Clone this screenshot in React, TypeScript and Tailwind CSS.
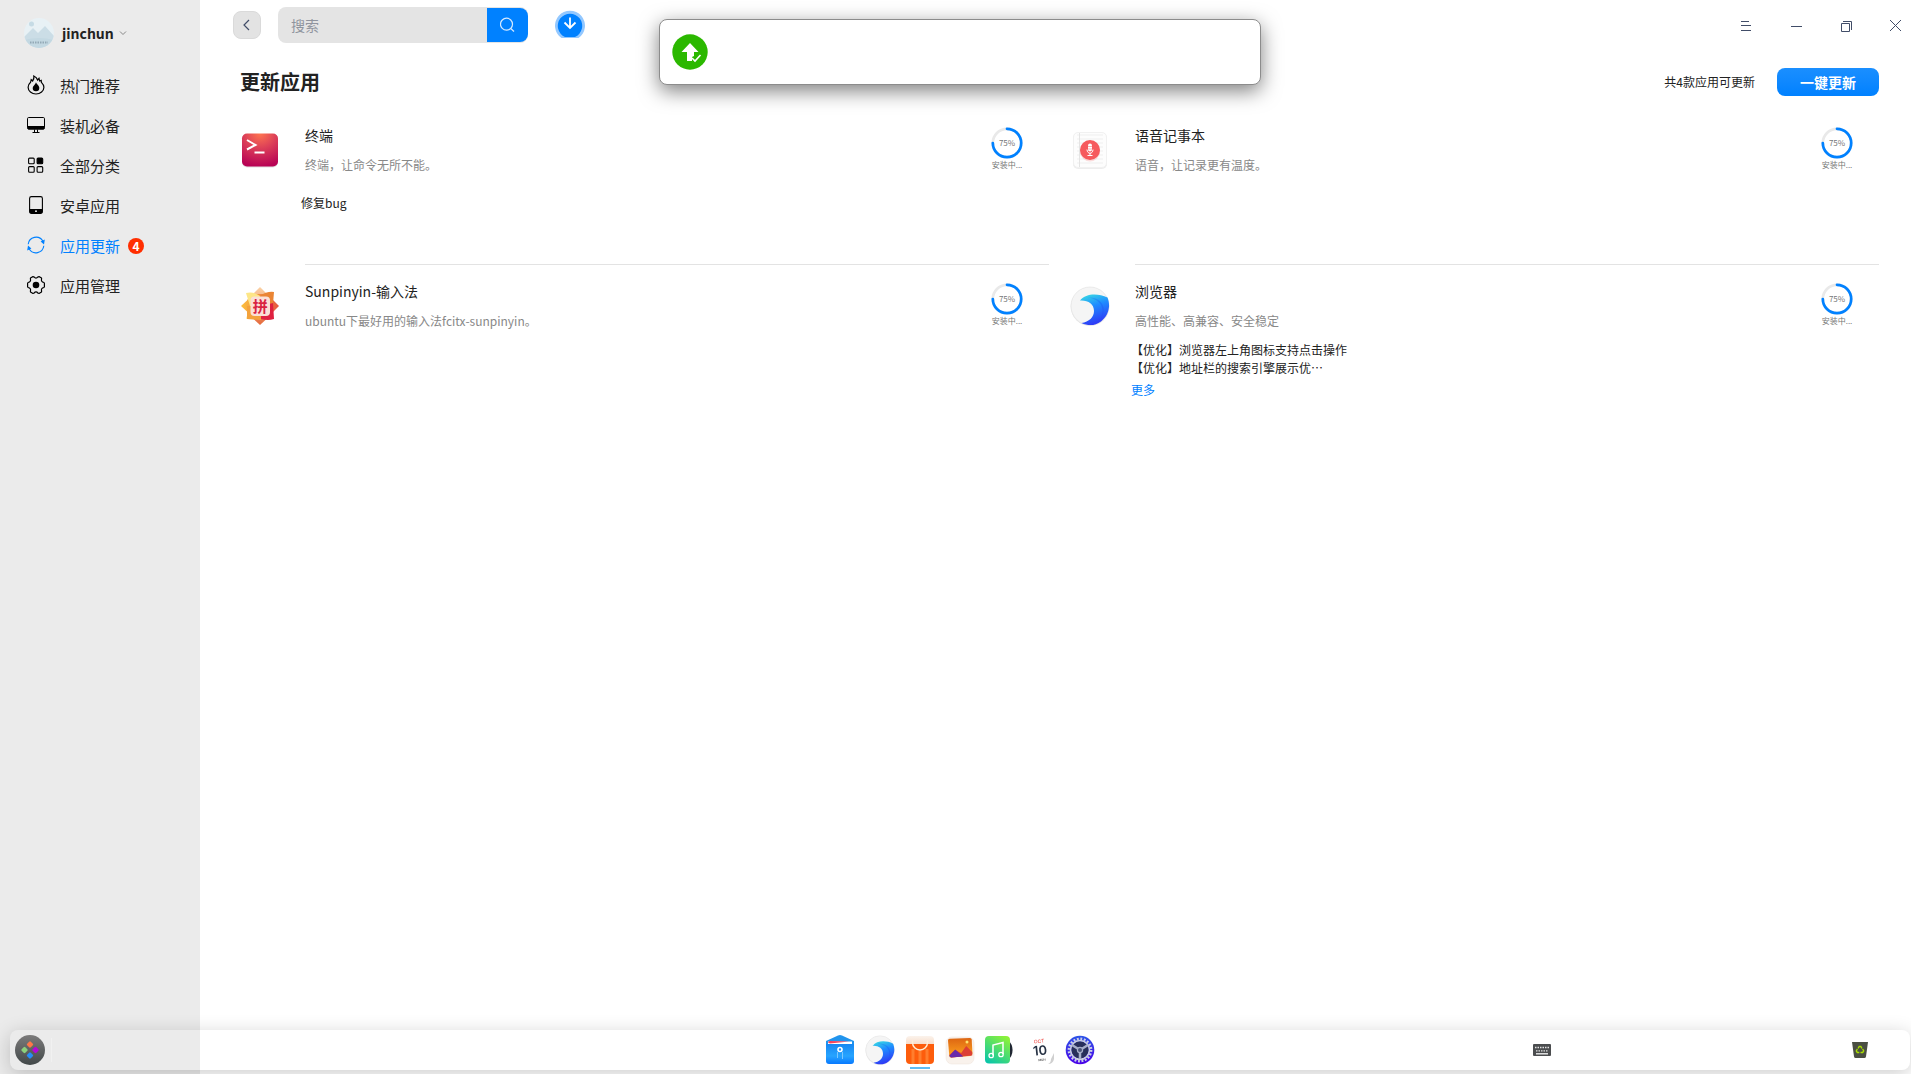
import React from 'react'
import clsx from 'clsx'

type Update = {
  name: string
  desc: string
  notes: string[]
  more?: boolean
  icon: React.ReactNode
}

/* ---------- sidebar icons ---------- */

const FireIcon = () => (
  <svg width="18" height="20" viewBox="0 0 18 20" fill="none" stroke="currentColor" strokeWidth="1.2">
    <path d="M3.600 7.200 4.200 4.600 5.600 6C6.800 4.600 7.200 3 6.800 1c2 .8 3.200 2.200 3.800 4l1.400-1.600.6 2.600 1.600-.6.2 2C16 9 16.900 10.600 16.900 12.200a7.900 6.800 0 0 1-15.800 0c0-2 .9-3.600 2.500-5Z" />
    <path d="M9 7.200c.4 2 3.300 3 3.300 5.700a3.300 3.300 0 0 1-6.600 0C5.700 10.900 8.600 9.400 9 7.200Z" fill="currentColor" stroke="none" />
  </svg>
)

const MonitorIcon = () => (
  <svg width="18" height="18" viewBox="0 0 18 18" fill="none" stroke="currentColor" strokeWidth="1">
    <rect x=".5" y="1.500" width="17" height="11.500" rx="1.200" />
    <path d="M.6 10h16.800v2.500l-.8.9H1.400l-.8-.9Z" fill="currentColor" stroke="none" />
    <path d="M7.500 13.500v2.500M10.500 13.500v2.500M5.500 16.500h7" />
  </svg>
)

const GridIcon = () => (
  <svg width="18" height="18" viewBox="0 0 18 18" fill="none" stroke="currentColor" strokeWidth="1.100">
    <rect x="1.600" y="2.100" width="5.600" height="5.600" rx="1" />
    <rect x="10.100" y="2.100" width="5.600" height="5.600" rx="1" fill="currentColor" />
    <rect x="1.600" y="10.600" width="5.600" height="5.600" rx="1" />
    <rect x="10.100" y="10.600" width="5.600" height="5.600" rx="1" />
  </svg>
)

const TabletIcon = () => (
  <svg width="18" height="18" viewBox="0 0 18 18" fill="none" stroke="currentColor" strokeWidth="1.100">
    <rect x="2.600" y=".6" width="12.800" height="16.800" rx="1.800" />
    <path d="M2.600 13h12.800v3.500l-1 .9H3.600l-1-.9Z" fill="currentColor" stroke="none" />
    <circle cx="9" cy="15.200" r=".9" fill="#fff" stroke="none" />
  </svg>
)

const RefreshIcon = () => (
  <svg width="18" height="18" viewBox="0 0 18 18" fill="none" stroke="currentColor" strokeWidth="1.100">
    <path d="M1.200 8.200A7.900 7.900 0 0 1 15.800 5M16.800 9.800A7.900 7.900 0 0 1 2.200 13" />
    <path d="m17.800 3.600-.8 5-3.400-3.200ZM.2 14.400l.8-5 3.400 3.200Z" fill="currentColor" stroke="none" />
  </svg>
)

const GearIcon = () => (
  <svg width="18" height="18" viewBox="0 0 18 18" fill="none" stroke="currentColor" strokeWidth="1.200" strokeLinejoin="round">
    <path d="M5.600.7 7 .9Q9 3.300 11 .9l1.400-.2 2.100 1.300.1.900q-.9 2.800 2.300 3.600l.5.800v3.400l-.5.800q-3.200.8-2.300 3.600l-.1.900-2.100 1.300-1.400-.2q-2-2.400-4 0l-1.400.2L3.500 16l-.1-.9q.9-2.800-2.300-3.600l-.5-.8V7.300l.5-.8q3.200-.8 2.300-3.600L3.500 2Z" />
    <circle cx="9" cy="9" r="3.300" fill="currentColor" stroke="none" />
  </svg>
)

/* ---------- app icons ---------- */

const TerminalIcon = () => (
  <svg width="40" height="40" viewBox="0 0 40 40" fill="none">
    <defs>
      <radialGradient id="term" cx=".5" cy="0" r="1">
        <stop offset="0" stopColor="#ff7550" />
        <stop offset=".45" stopColor="#dc3f58" />
        <stop offset="1" stopColor="#b80355" />
      </radialGradient>
    </defs>
    <rect x="2" y="4" width="36" height="33.500" rx="5" fill="#000" opacity=".12" />
    <rect x="2" y="3.500" width="36" height="33" rx="5" fill="url(#term)" />
    <path d="m7 10 8.500 5L7 19.500M14.500 22.500h10" stroke="#fff" strokeWidth="2" />
  </svg>
)

const VoiceNoteIcon = () => (
  <svg width="40" height="40" viewBox="0 0 40 40" fill="none">
    <rect x="3" y="3" width="34" height="36" rx="5" fill="#000" opacity=".07" />
    <rect x="3.500" y="2.500" width="33" height="35" rx="4.500" fill="#fdfdfd" stroke="#f1f1f1" />
    <path d="M7 5h26M7 9h26M7 13h26M7 17h26M7 21h26M7 25h26M7 29h26M7 33h26" stroke="#efefef" />
    <path d="M9.500 3v34" stroke="#e4e4e4" />
    <circle cx="20" cy="21.500" r="10" fill="#f65a5a" opacity=".2" />
    <circle cx="20" cy="20" r="10" fill="#f65a5d" />
    <rect x="18" y="13.500" width="4" height="8" rx="2" fill="#fff" />
    <path d="M17 19.500c0 5 6 5 6 0M20 23v3M17.500 25.500h5" stroke="#fff" />
    <path d="M17.500 16.500h5M17.500 19h5" stroke="#f65a5d" strokeWidth=".5" />
  </svg>
)

const PinyinIcon = () => (
  <svg width="40" height="40" viewBox="0 0 40 40">
    <defs>
      <linearGradient id="pyA" x1="0" y1="0" x2="0" y2="1">
        <stop offset="0" stopColor="#fbd2a4" />
        <stop offset="1" stopColor="#e56a3c" />
      </linearGradient>
      <linearGradient id="pyB" x1="0" y1="0" x2="1" y2="0">
        <stop offset="0" stopColor="#fcc03e" />
        <stop offset="1" stopColor="#e55740" />
      </linearGradient>
    </defs>
    <path d="M20 1 33 14v13L20 39 7 27V14Z" fill="url(#pyA)" />
    <path d="M1 20 14 8h13l12 12-12 12H14Z" fill="url(#pyB)" />
    <path d="M6 7q7-2 14 3l-5 18-9 5 4-13Z" fill="#fde687" />
    <path d="M20 10q7-5 14-4l-1 12-6 6Z" fill="#ea8534" />
    <path d="M7 20v13l14 1V20Z" fill="#f3a23c" />
    <path d="M21 20v13q7 2 13 0l-1-16Z" fill="#df2140" />
    <rect x="10.500" y="10.500" width="19.500" height="19.500" rx="4" fill="#fbe0d6" />
    <text x="20.200" y="26" textAnchor="middle" fontSize="15" fontWeight="700" fill="#d92341">拼</text>
  </svg>
)

const BrowserIcon = ({ id, size }: { id: string; size: number }) => (
  <svg width={size} height={size} viewBox="0 0 40 40">
    <defs>
      <linearGradient id={id} x1=".2" y1="0" x2=".5" y2="1">
        <stop offset="0" stopColor="#38d8e4" />
        <stop offset=".4" stopColor="#1f8dff" />
        <stop offset="1" stopColor="#2f36f5" />
      </linearGradient>
    </defs>
    <circle cx="20" cy="20.600" r="19.300" fill="#000" opacity=".1" />
    <circle cx="20" cy="20" r="19" fill="#f5f5f5" stroke="#e3e3e3" strokeWidth=".6" />
    <path d="M10 14.500C16 7 28 7 37.500 11.500 41 20 38.500 30 31 35.500 25 40 18 40 11.500 37 19 36 24 31 24 25c0-7-6-11-14-10.500Z" fill={`url(#${id})`} />
    <path d="M17 11.500c10-1 18 5 16.500 14-.5 4-2 7-5 10 8-8 5-23-11.500-24Z" fill="#1745f0" opacity=".25" />
  </svg>
)

const StoreIcon = () => (
  <svg width="30" height="30" viewBox="0 0 30 30" fill="none">
    <defs>
      <linearGradient id="store" x1="0" y1="0" x2="0" y2="1">
        <stop offset="0" stopColor="#fbf3ec" />
        <stop offset="1" stopColor="#f6cdb2" />
      </linearGradient>
    </defs>
    <rect x="1" y="1" width="28" height="14" rx="4" fill="url(#store)" />
    <path d="M1 9h28v16a4 4 0 0 1-4 4H5a4 4 0 0 1-4-4Z" fill="#fd5d0c" />
    <path d="M8 14v15M15 16v13M22 14v15" stroke="#ff8d3d" strokeWidth="3" opacity=".7" />
    <path d="M7.500 5.500v2a7.500 7.500 0 0 0 15 0v-2" stroke="#fff0d8" strokeWidth="1.400" />
  </svg>
)

const FilesIcon = () => (
  <svg width="30" height="30" viewBox="0 0 30 30" fill="none">
    <defs>
      <linearGradient id="files" x1="0" y1="0" x2="0" y2="1">
        <stop offset="0" stopColor="#1687f2" />
        <stop offset=".6" stopColor="#27a4ff" />
        <stop offset="1" stopColor="#0879ff" />
      </linearGradient>
    </defs>
    <path d="M1 6 13 .5q2-.9 4 0L29 6v10H1Z" fill="#2194ed" />
    <path d="M3 6.500h24v4H3Z" fill="#fff" />
    <path d="M3 7.500q0-1.500 2-1.500l19 .5L5 8.500Z" fill="#f4435c" />
    <path d="M1 9h28v17a3 3 0 0 1-3 3H4a3 3 0 0 1-3-3Z" fill="url(#files)" />
    <circle cx="15" cy="14.500" r="2" stroke="#fff" strokeWidth="1.600" />
    <path d="M12.500 17v6M17.500 17v7" stroke="#7cc8ff" />
  </svg>
)

const PhotosIcon = () => (
  <svg width="30" height="30" viewBox="0 0 30 30">
    <defs>
      <linearGradient id="photo" x1="0" y1="0" x2="0" y2="1">
        <stop offset="0" stopColor="#dd6512" />
        <stop offset="1" stopColor="#ffa51f" />
      </linearGradient>
    </defs>
    <rect x="1" y="2" width="28" height="27" rx="6" fill="#f9f2ec" stroke="#ece2da" strokeWidth=".5" />
    <path d="M3 5.500q0-1.500 1.500-1.700L25 3q1.500 0 1.700 1.500L27.500 19l-2 2L6 22.500q-1.500 0-1.700-1.500Z" fill="url(#photo)" />
    <path d="m4.200 20 6-5 6 3 5-7 6 6v3.500L6 22.500Z" fill="#dc3f35" />
    <path d="m4.200 21 6-6.500 8 7L6 22.500Z" fill="#6729aa" />
    <circle cx="22" cy="7" r="1.500" fill="#ffe26c" />
  </svg>
)

const MusicIcon = () => (
  <svg width="30" height="30" viewBox="0 0 30 30" fill="none">
    <defs>
      <linearGradient id="music" x1=".8" y1="0" x2=".2" y2="1">
        <stop offset="0" stopColor="#8df238" />
        <stop offset="1" stopColor="#0bc6a8" />
      </linearGradient>
    </defs>
    <path d="M22 6a12 12 0 0 1 0 18Z" fill="#202733" stroke="#202733" strokeWidth="3" />
    <rect x="0" y="1" width="25" height="27.500" rx="4" fill="url(#music)" />
    <path d="M8 20.500V10l10-2.500V19" stroke="#fff" strokeWidth="1.500" />
    <circle cx="6.200" cy="20.500" r="2.200" stroke="#fff" strokeWidth="1.300" />
    <circle cx="16" cy="19.500" r="2.200" stroke="#fff" strokeWidth="1.300" />
  </svg>
)

const CalendarIcon = () => (
  <svg width="30" height="30" viewBox="0 0 30 30" fontFamily="Inter, sans-serif" textAnchor="middle">
    <path d="M29 18v6q-1 5-6 5 3-1 3-5Z" fill="#d0d0d0" />
    <g transform="rotate(-6 15 15)">
      <text x="15" y="8" fontSize="5" fontWeight="500" fill="#ef5a55">OCT</text>
      <text x="15" y="20" fontSize="13" fontWeight="600" fill="#273244">10</text>
      <text x="16" y="26" fontSize="3" fontWeight="600" fill="#555">MON</text>
    </g>
  </svg>
)

const SettingsIcon = () => (
  <svg width="30" height="30" viewBox="0 0 30 30" fill="none">
    <defs>
      <linearGradient id="settings" x1="0" y1="0" x2="0" y2="1">
        <stop offset="0" stopColor="#2c55e8" />
        <stop offset="1" stopColor="#4a00e8" />
      </linearGradient>
    </defs>
    <circle cx="15" cy="15" r="14.300" fill="url(#settings)" />
    <circle cx="15" cy="15" r="11.200" stroke="#c9cfe6" strokeWidth="2.400" strokeDasharray="1.900 1.620" />
    <circle cx="15" cy="15" r="9.400" stroke="#c9cfe0" strokeWidth="1.800" />
    <circle cx="15" cy="15" r="8.500" fill="#27305a" />
    <path d="M15 15v9M15 15l-8-5M15 15l8-5" stroke="#a6afc9" strokeWidth="2.500" />
    <circle cx="15" cy="15" r="2.600" fill="#4a5478" stroke="#a6afc9" strokeWidth="1.200" />
  </svg>
)

const LauncherIcon = () => (
  <svg width="30" height="30" viewBox="0 0 30 30">
    <defs>
      <linearGradient id="launch" x1="0" y1="0" x2="0" y2="1">
        <stop offset="0" stopColor="#7c7b7b" />
        <stop offset="1" stopColor="#424849" />
      </linearGradient>
    </defs>
    <circle cx="15" cy="15" r="15" fill="url(#launch)" />
    <rect x="12.400" y="6.900" width="5.200" height="5.200" rx="1.200" transform="rotate(45 15 9.500)" fill="#ff7748" />
    <rect x="6.900" y="12.400" width="5.200" height="5.200" rx="1.200" transform="rotate(45 9.500 15)" fill="#8cd17c" />
    <rect x="17.900" y="12.400" width="5.200" height="5.200" rx="1.200" transform="rotate(45 20.500 15)" fill="#b508d8" />
    <rect x="12.400" y="17.900" width="5.200" height="5.200" rx="1.200" transform="rotate(45 15 20.500)" fill="#268cf8" />
  </svg>
)

const KeyboardIcon = () => (
  <svg width="18" height="12" viewBox="0 0 18 12" fill="none">
    <rect width="18" height="12" rx="1" fill="#4b4d4f" />
    <path d="M2 3.500h14M3 6.800h12" stroke="#e4e4e4" strokeWidth="1.300" strokeDasharray="1.500 1" />
    <path d="M3 9.800h12" stroke="#eee" strokeWidth="1.400" />
  </svg>
)

const TrashIcon = () => (
  <svg width="16" height="16" viewBox="0 0 16 16" fill="none">
    <path d="M0 0h16l-2 14.500q-.2 1.500-1.700 1.500H3.700Q2.200 16 2 14.500Z" fill="#4a4e42" />
    <path d="m6 6.500 1.200-2h1.600l1.200 2M10.700 7l1 2-1 1.500H8.500M7.300 10.500h-2L4.300 9l1-2" stroke="#a9e000" strokeWidth="1.400" />
  </svg>
)

/* ---------- data ---------- */

const menu = [
  { label: '热门推荐', icon: <FireIcon /> },
  { label: '装机必备', icon: <MonitorIcon /> },
  { label: '全部分类', icon: <GridIcon /> },
  { label: '安卓应用', icon: <TabletIcon /> },
  { label: '应用更新', icon: <RefreshIcon />, active: true, badge: 4 },
  { label: '应用管理', icon: <GearIcon /> },
]

const updates: Update[] = [
  { name: '终端', desc: '终端，让命令无所不能。', notes: ['修复bug'], icon: <TerminalIcon /> },
  { name: '语音记事本', desc: '语音，让记录更有温度。', notes: [], icon: <VoiceNoteIcon /> },
  { name: 'Sunpinyin-输入法', desc: 'ubuntu下最好用的输入法fcitx-sunpinyin。', notes: [], icon: <PinyinIcon /> },
  {
    name: '浏览器',
    desc: '高性能、高兼容、安全稳定',
    notes: ['【优化】浏览器左上角图标支持点击操作', '【优化】地址栏的搜索引擎展示优⋯'],
    more: true,
    icon: <BrowserIcon id="browser" size={40} />,
  },
]

const dockApps = [
  { label: '文件管理器', icon: <FilesIcon /> },
  { label: '浏览器', icon: <BrowserIcon id="dockBrowser" size={30} /> },
  { label: '应用商店', icon: <StoreIcon />, running: true },
  { label: '相册', icon: <PhotosIcon /> },
  { label: '音乐', icon: <MusicIcon /> },
  { label: '日历', icon: <CalendarIcon /> },
  { label: '控制中心', icon: <SettingsIcon /> },
]

/* ---------- sections ---------- */

const Sidebar = () => (
  <aside className="w-[200px] shrink-0 bg-[#ebebeb] pt-[18px]">
    <button type="button" className="ml-6 flex h-[30px] items-center text-sm font-bold">
      <svg width="30" height="30" viewBox="0 0 30 30">
        <defs>
          <clipPath id="avatar"><circle cx="15" cy="15" r="15" /></clipPath>
        </defs>
        <g clipPath="url(#avatar)">
          <path d="M0 0h30v30H0Z" fill="#e8f1f5" />
          <circle cx="7.500" cy="6" r="2.500" fill="#c6dbe5" />
          <path d="M0 19 9 10l5 5 7-7 9 10v12H0Z" fill="#cbdde6" />
          <path d="M0 22q15-4 30 0v8H0Z" fill="#c3d8e2" />
          <path d="M6 24.500h18" stroke="#93a9b6" strokeWidth="2" strokeDasharray="1.500 1" />
        </g>
      </svg>
      <span className="ml-2">jinchun</span>
      <svg className="ml-1" width="10" height="10" viewBox="0 0 10 10" fill="none" stroke="#888">
        <path d="m2 3.500 3 3 3-3" />
      </svg>
    </button>
    <nav className="mt-[18px]">
      {menu.map((item) => (
        <a
          key={item.label}
          href="#"
          className={clsx('flex h-10 items-center pl-[27px] text-[15px]', item.active ? 'text-[#0081ff]' : 'text-[#222]')}
        >
          <span className={clsx('pb-0.5', !item.active && 'text-black')}>{item.icon}</span>
          <span className="ml-[15px]">{item.label}</span>
          {item.badge && (
            <span className="ml-2 flex size-4 items-center justify-center rounded-full bg-[#ff2e00] text-xs font-bold text-white">
              {item.badge}
            </span>
          )}
        </a>
      ))}
    </nav>
  </aside>
)

const TopBar = () => (
  <header className="flex h-[50px] items-center pl-[33px] pr-2">
    <button type="button" aria-label="返回" className="flex size-7 items-center justify-center rounded-lg border border-[#dadada] bg-[#e3e3e3]">
      <svg width="8" height="12" viewBox="0 0 8 12" fill="none" stroke="#414d68" strokeWidth="1.200">
        <path d="M6 1 1 6l5 5" />
      </svg>
    </button>
    <form className="ml-[17px] flex h-9 w-[250px] items-center rounded-lg bg-[#e4e4e4]">
      <input
        type="text"
        aria-label="搜索"
        placeholder="搜索"
        className="h-full w-[209px] bg-transparent pl-[13px] text-sm outline-none placeholder:text-[#8f949e]"
      />
      <button type="button" aria-label="开始搜索" className="flex h-[34px] w-[41px] items-center justify-center rounded-r-lg bg-[#0081ff]">
        <svg width="16" height="16" viewBox="0 0 16 16" fill="none" stroke="#d6eaff" strokeWidth="1.200">
          <circle cx="6.500" cy="7.200" r="6" />
          <path d="m10.800 11.500 3.200 3" />
        </svg>
      </button>
    </form>
    <button type="button" aria-label="下载管理" className="ml-[27px]">
      <svg width="30" height="30" viewBox="0 0 30 30" fill="none">
        <path d="M6.500 28A15 15 0 1 1 23.500 28Z" fill="#93c8ff" />
        <path d="M10 27A12.200 12.200 0 1 1 20 27Z" fill="#0081ff" />
        <path d="M15 7.500v10M9.500 12.500l5.500 5.500 5.500-5.500" stroke="#fff" strokeWidth="1.800" />
      </svg>
    </button>
    <div className="ml-auto flex gap-[34px] pt-0.5 text-[#414d68]">
      <button type="button" aria-label="菜单">
        <svg width="16" height="16" viewBox="0 0 16 16" stroke="currentColor"><path d="M4 3.500h8M4 7.500h10M4 12.500h10" /></svg>
      </button>
      <button type="button" aria-label="最小化">
        <svg width="16" height="16" viewBox="0 0 16 16" stroke="currentColor"><path d="M4 8.500h11" /></svg>
      </button>
      <button type="button" aria-label="还原">
        <svg width="16" height="16" viewBox="0 0 16 16" fill="none" stroke="currentColor"><path d="M4.500 5.500h8v8h-8ZM6 3.500h8.500V12" /></svg>
      </button>
      <button type="button" aria-label="关闭">
        <svg width="16" height="16" viewBox="0 0 16 16" stroke="currentColor"><path d="m3 2 11 11M14 2 3 13" /></svg>
      </button>
    </div>
  </header>
)

const Progress = () => (
  <div className="flex w-8 shrink-0 flex-col items-center whitespace-nowrap text-[8px] leading-3 text-[#777]">
    <div className="relative size-8">
      <svg width="32" height="32" viewBox="0 0 32 32" fill="none" strokeWidth="2.700">
        <circle cx="16" cy="16" r="14.200" stroke="#e9e9e9" />
        <circle cx="16" cy="16" r="14.200" stroke="#0081ff" strokeLinecap="round" pathLength="100" strokeDasharray="75 25" transform="rotate(-90 16 16)" />
      </svg>
      <span className="absolute inset-0 flex items-center justify-center">75%</span>
    </div>
    <span>安装中...</span>
  </div>
)

const UpdateCard = ({ app }: { app: Update }) => (
  <article className="flex h-[156px] gap-[25px]">
    <div className="mt-[21px] shrink-0">{app.icon}</div>
    <div className="flex min-w-0 flex-1 items-start border-b border-[#e3e3e3] group-[.last]:border-transparent">
      <div className="min-w-0 flex-1 pt-4">
        <h2 className="text-sm leading-5">{app.name}</h2>
        <p className="mt-2.5 text-xs leading-5 text-[#888]">{app.desc}</p>
        <div className="-ml-1 mt-2.5 flex h-9 flex-col justify-center text-xs leading-[18px]">
          {app.notes.map((note) => (
            <p key={note}>{note}</p>
          ))}
        </div>
        {app.more && <a href="#" className="-ml-1 mt-1 block w-fit text-xs leading-[18px] text-[#0081ff]">更多</a>}
      </div>
      <div className="mr-[26px] mt-[18px]">
        <Progress />
      </div>
    </div>
  </article>
)

const Toast = () => (
  <div className="pointer-events-none fixed inset-x-0 top-[19px] flex justify-center pl-2">
    <div role="status" className="flex h-[66px] w-[602px] items-center rounded-lg border border-[#8c8c8c] bg-white pl-3 shadow-[0_6px_20px_rgba(0,0,0,0.5)]">
      <svg width="36" height="36" viewBox="0 0 36 36" fill="none">
        <circle cx="18" cy="18" r="17.700" fill="#2bb800" />
        <path d="M18 9 26.500 18H22v4l-2 1v4h-5v-9H9.500Z" fill="#fff" />
        <path d="m20 24 3 3 5.500-6" stroke="#fff" strokeWidth="1.600" />
      </svg>
    </div>
  </div>
)

const Dock = () => (
  <footer className="fixed bottom-1 left-2.5 right-px grid h-10 grid-cols-[1fr_auto_1fr] items-center rounded-lg shadow-[0_4px_20px_rgba(0,0,0,0.2)]">
    <div className="flex items-center gap-1.5 pl-[5px]">
      <button type="button" aria-label="启动器"><LauncherIcon /></button>
      <span className="h-6 w-px bg-[#f1f1f1]" />
    </div>
    <div className="flex gap-2.5">
      {dockApps.map((app) => (
        <button key={app.label} type="button" aria-label={app.label} className="relative">
          {app.icon}
          {app.running && <span className="absolute -bottom-1 left-[5px] h-0.5 w-5 bg-[#5ebdf5]" />}
        </button>
      ))}
    </div>
    <div className="flex items-center justify-end gap-[301px] pr-[42px]">
      <button type="button" aria-label="键盘"><KeyboardIcon /></button>
      <button type="button" aria-label="回收站"><TrashIcon /></button>
    </div>
  </footer>
)

const App = () => {
  return (
    <div className="flex min-h-screen bg-white font-['Noto_Sans_CJK_SC','Noto_Sans',sans-serif] text-[#222]">
      <Sidebar />
      <div className="min-w-0 flex-1">
        <TopBar />
        <main className="pb-14 pl-10 pr-8">
          <div className="flex h-[59px] items-center pt-1">
            <h1 className="text-xl font-bold">更新应用</h1>
            <span className="ml-auto text-xs">共4款应用可更新</span>
            <button
              type="button"
              className="ml-[22px] h-7 w-[102px] rounded-lg bg-linear-to-b from-[#1a8fff] to-[#0081ff] text-sm font-bold text-white"
            >
              一键更新
            </button>
          </div>
          <div className="grid grid-cols-2 gap-x-[21px]">
            {updates.map((app, i) => (
              <div key={app.name} className={clsx('group', i >= updates.length - 2 && 'last')}>
                <UpdateCard app={app} />
              </div>
            ))}
          </div>
        </main>
      </div>
      <Toast />
      <Dock />
    </div>
  )
}

export default App
